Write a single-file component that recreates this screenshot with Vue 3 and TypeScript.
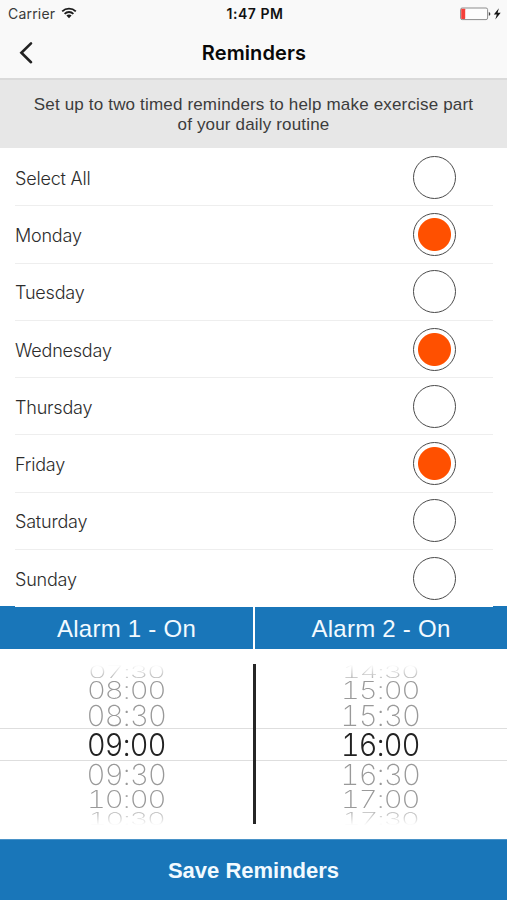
<script setup lang="ts">
import { ref } from 'vue'

interface Day {
  name: string
  selected: boolean
}

interface Alarm {
  title: string
  times: string[]
}

const days = ref<Day[]>([
  { name: 'Select All', selected: false },
  { name: 'Monday', selected: true },
  { name: 'Tuesday', selected: false },
  { name: 'Wednesday', selected: true },
  { name: 'Thursday', selected: false },
  { name: 'Friday', selected: true },
  { name: 'Saturday', selected: false },
  { name: 'Sunday', selected: false },
])

const alarms: Alarm[] = [
  { title: 'Alarm 1 - On', times: ['07:30', '08:00', '08:30', '09:00', '09:30', '10:00', '10:30'] },
  { title: 'Alarm 2 - On', times: ['14:30', '15:00', '15:30', '16:00', '16:30', '17:00', '17:30'] },
]

function toggle(day: Day) {
  day.selected = !day.selected
}
</script>

<template>
  <div class="screen">
    <header class="top">
      <div class="status">
        <div class="carrier">
          <span>Carrier</span>
          <svg class="wifi" width="16" height="12" viewBox="0 0 16 12">
            <path d="M1.2 4.3a9.8 9.8 0 0 1 13.6 0M3.6 6.8a6.3 6.3 0 0 1 8.8 0" fill="none" stroke="#1c1c1c" stroke-width="1.8" />
            <path d="M5.4 8.6a3.8 3.8 0 0 1 5.2 0L8 11.3z" fill="#1c1c1c" />
          </svg>
        </div>
        <div class="clock">1:47 PM</div>
        <div class="power">
          <svg width="42" height="14" viewBox="0 0 42 14">
            <rect x="0.6" y="1" width="27" height="11.6" rx="1.6" fill="#fdfdfd" stroke="#8d8d8d" stroke-width="1" />
            <rect x="1.2" y="1.7" width="4" height="10.2" rx="0.6" fill="#f5403a" />
            <path d="M28.8 5v3.8q1.6-.4 1.6-1.9T28.8 5z" fill="#444" />
            <path d="M38.9 1.2l-5.1 6.3h3l-1.5 4.9 5.4-6.6h-3.1z" fill="#161616" />
          </svg>
        </div>
      </div>
      <nav class="nav">
        <button class="back" aria-label="Back">
          <svg width="14" height="24" viewBox="0 0 14 24">
            <path d="M12 2.4L2.4 11.8 12 21.2" fill="none" stroke="#222" stroke-width="2.6" stroke-linecap="round" />
          </svg>
        </button>
        <h1>Reminders</h1>
      </nav>
    </header>

    <p class="intro"><span class="line one">Set up to two timed reminders to help make exercise part</span> <span class="line two">of your daily routine</span></p>

    <ul class="days">
      <li v-for="day in days" :key="day.name" class="day">
        <span>{{ day.name }}</span>
        <button class="radio" :class="{ on: day.selected }" :aria-label="day.name" @click="toggle(day)"></button>
      </li>
    </ul>

    <div class="tabs">
      <div v-for="alarm in alarms" :key="alarm.title" class="tab">{{ alarm.title }}</div>
    </div>

    <div class="pickers">
      <div v-for="alarm in alarms" :key="alarm.title" class="picker">
        <div v-for="(time, i) in alarm.times" :key="time" class="slot" :class="'slot-' + i">
          <span>{{ time }}</span>
        </div>
      </div>
    </div>

    <button class="save">Save Reminders</button>
  </div>
</template>

<style>
body {
  margin: 0;
}
</style>

<style scoped>
.screen {
  display: flex;
  flex-direction: column;
  width: 507px;
  height: 900px;
  overflow: hidden;
  background: #fff;
  color: #2c2c2c;
  font-family: "Liberation Sans", Arial, sans-serif;
}
button {
  padding: 0;
  border: 0;
  background: none;
  font-family: inherit;
}
.top {
  box-sizing: border-box;
  height: 80px;
  background: #f9f9f9;
  border-bottom: 2px solid #dadada;
  font-family: Inter, sans-serif;
}
.status {
  display: grid;
  grid-template-columns: 1fr auto 1fr;
  align-items: center;
  height: 27px;
  padding: 0 5px 0 8px;
}
.carrier {
  display: flex;
  align-items: center;
  gap: 6px;
  font-size: 14px;
  letter-spacing: 0.2px;
  color: #3a3a3a;
}
.wifi {
  margin-top: -1px;
}
.clock {
  font-size: 14px;
  font-weight: 600;
  letter-spacing: 0.55px;
  color: #111;
}
.power {
  display: flex;
  justify-content: flex-end;
}
.nav {
  display: grid;
  grid-template-columns: 60px 1fr 60px;
  align-items: center;
  height: 51px;
}
.back {
  display: flex;
  padding-left: 19px;
}
h1 {
  margin: 0;
  padding-left: 1px;
  text-align: center;
  font-size: 20px;
  font-weight: 600;
  letter-spacing: 0.12px;
  color: #080808;
}
.intro {
  box-sizing: border-box;
  height: 68px;
  margin: 0;
  padding-top: 15px;
  background: #e7e7e7;
  text-align: center;
  font-size: 17px;
  line-height: 20px;
  letter-spacing: 0.17px;
  color: #3c3c3c;
}
.line {
  display: block;
}
.days {
  box-sizing: border-box;
  position: relative;
  z-index: 1;
  display: grid;
  grid-template-rows: repeat(8, 57.3px);
  height: 459px;
  margin: 0;
  padding: 1px 0 0;
  list-style: none;
}
.day {
  box-sizing: border-box;
  display: flex;
  align-items: center;
  justify-content: space-between;
  margin: 0 14px 0 15px;
  padding: 0 37px 1px 0;
  border-bottom: 1px solid #eeeeee;
  font-family: Inter, sans-serif;
  font-weight: 300;
  font-size: 18px;
  letter-spacing: -0.2px;
}
.day > span {
  padding-top: 3px;
}
.day:last-child {
  border-bottom-color: #fff;
}
.radio {
  box-sizing: border-box;
  width: 43px;
  height: 43px;
  margin-top: 1px;
  border: 1.6px solid #4a4a4a;
  border-radius: 50%;
}
.radio.on {
  background: radial-gradient(circle, #ff5000 16px, #fff 17px);
}
.tabs {
  display: grid;
  grid-template-columns: 253px 1fr;
  gap: 2px;
  height: 43px;
  margin-top: -1px;
}
.tab {
  display: flex;
  align-items: center;
  justify-content: center;
  padding-top: 2px;
  background: #1976b9;
  color: #f2faff;
  font-size: 24px;
  letter-spacing: 0.25px;
}
.pickers {
  display: grid;
  grid-template-columns: 253px 1fr;
  gap: 3px;
  height: 190px;
  background: linear-gradient(#262626, #262626) 253px 15px / 3px 160px no-repeat;
}
.picker {
  padding-top: 15px;
}
.slot {
  box-sizing: border-box;
  display: flex;
  align-items: center;
  justify-content: center;
  height: 26px;
  padding-top: 2px;
  font-family: Inter, sans-serif;
  font-weight: 250;
  font-size: 29px;
  font-variant-numeric: tabular-nums;
  font-feature-settings: "calt" 0;
  letter-spacing: -0.8px;
  line-height: 0.8;
  color: #999;
  white-space: nowrap;
}
.picker:nth-child(2) .slot {
  padding-right: 3px;
}
.slot-0 {
  height: 14px;
  font-size: 17px;
  line-height: 12px;
  -webkit-mask-image: linear-gradient(transparent 5%, rgba(0, 0, 0, 0.7));
  mask-image: linear-gradient(transparent 5%, rgba(0, 0, 0, 0.7));
}
.slot-0 span,
.slot-6 span {
  transform: scaleX(1.72);
}
.slot-1 {
  height: 24px;
  font-size: 24px;
}
.slot-1 span,
.slot-5 span {
  transform: scaleX(1.22);
}
.slot-2 span,
.slot-4 span {
  transform: scaleX(1.01);
}
.slot-3 {
  height: 33px;
  border-top: 1px solid #dedede;
  border-bottom: 1px solid #dedede;
  font-size: 31px;
  font-weight: 280;
  color: #222;
}
.slot-3 span {
  transform: scaleX(0.93);
}
.slot-4 {
  height: 25px;
}
.slot-5 {
  height: 26px;
  font-size: 24px;
}
.slot-6 {
  height: 14px;
  padding-top: 0;
  font-size: 17px;
  line-height: 14px;
  -webkit-mask-image: linear-gradient(rgba(0, 0, 0, 0.7), transparent 95%);
  mask-image: linear-gradient(rgba(0, 0, 0, 0.7), transparent 95%);
}
.save {
  height: 61px;
  padding-top: 2px;
  background: #1976b9;
  border-top: 1px solid #4a93c8;
  color: #f2faff;
  font-size: 22px;
  font-weight: 700;
}
</style>
